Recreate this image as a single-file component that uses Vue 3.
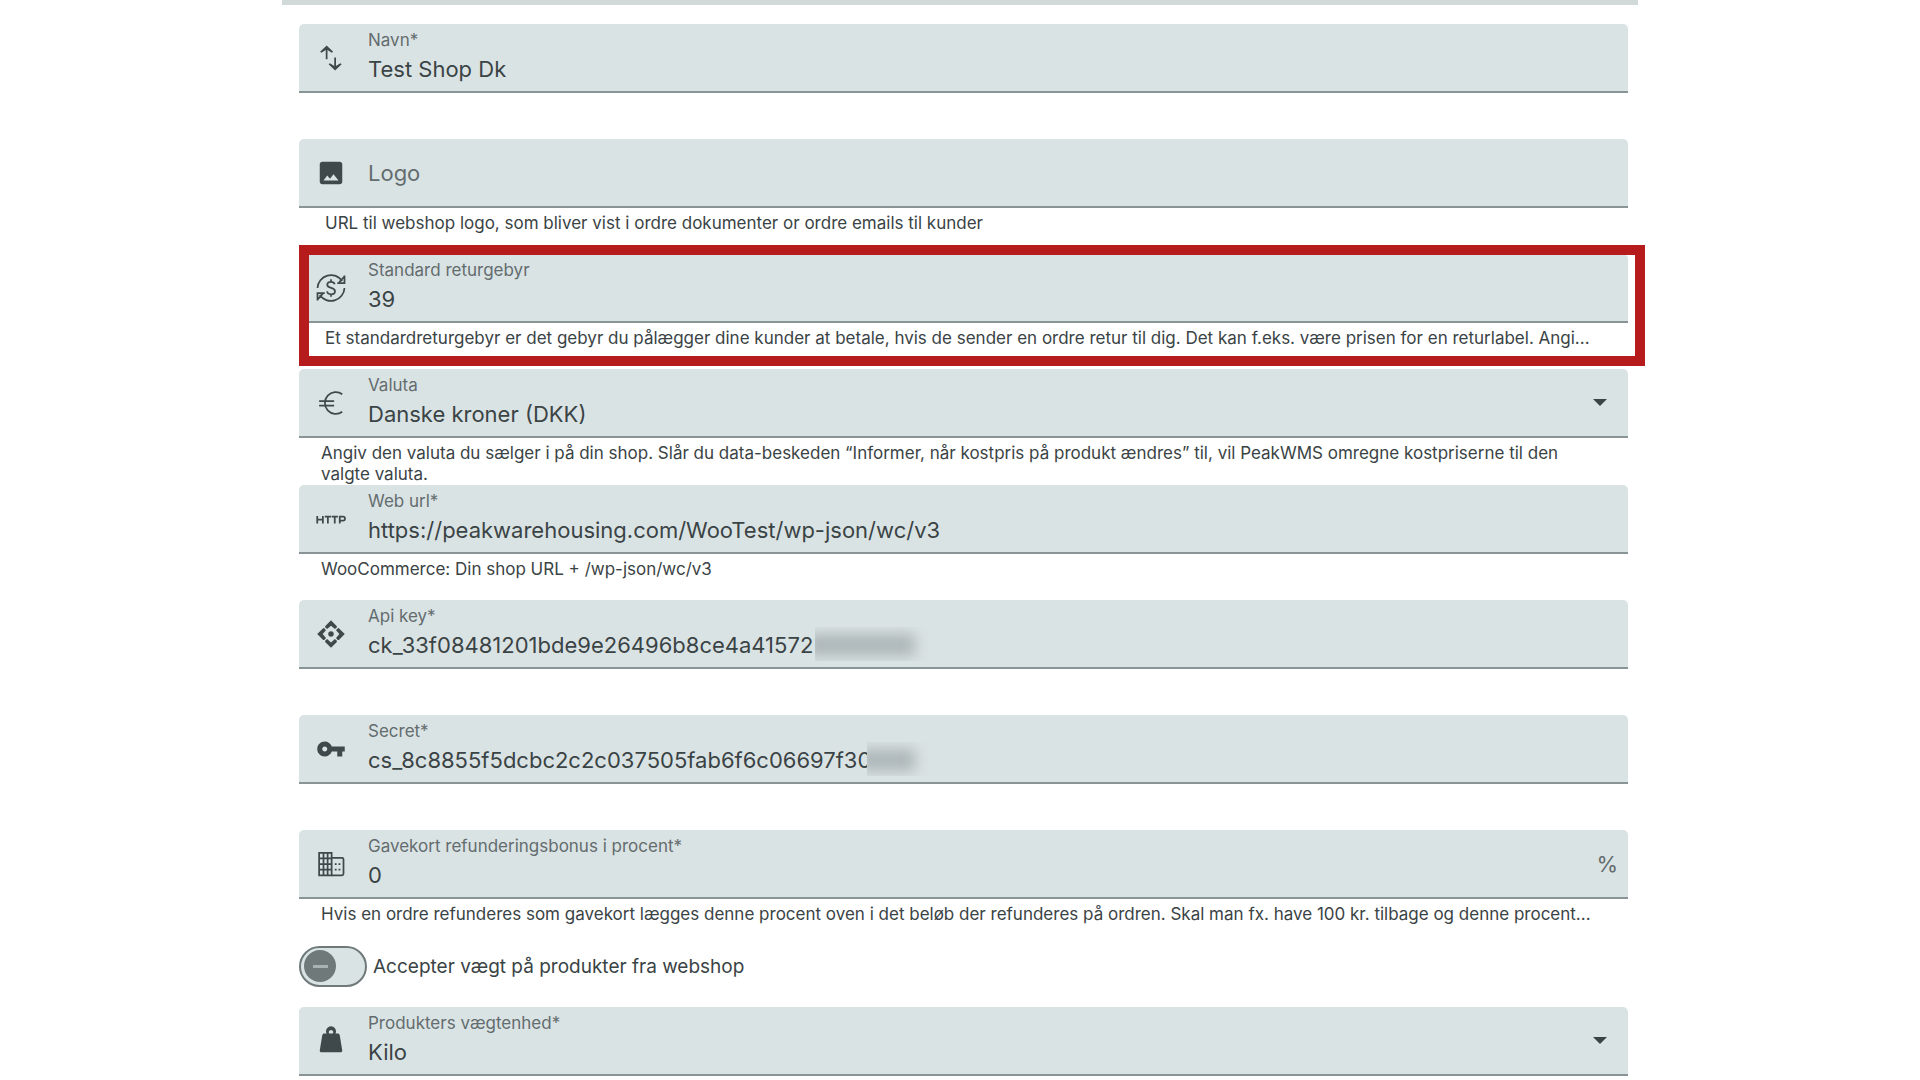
<template>
  <main class="page">
    <form class="settings" @submit.prevent>
      <div v-for="field in fields" :key="field.id" class="row">
        <div class="field">
          <svg class="icon" viewBox="0 0 24 24" aria-hidden="true">
            <path v-for="d in icons[field.icon].fill" :key="d" :d="d" fill="currentColor" fill-rule="evenodd" />
            <path v-for="d in icons[field.icon].stroke" :key="d" :d="d" class="stroke" />
          </svg>
          <div class="control" :class="{ empty: !field.label }">
            <label v-if="field.label" :for="field.id">{{ field.label }}</label>
            <select v-if="field.options" :id="field.id" v-model="field.value">
              <option v-for="option in field.options" :key="option">{{ option }}</option>
            </select>
            <input
              v-else
              :id="field.id"
              v-model="field.value"
              type="text"
              :placeholder="field.placeholder"
              :aria-label="field.placeholder"
              spellcheck="false"
            />
          </div>
          <span v-if="field.suffix" class="suffix">{{ field.suffix }}</span>
          <svg v-if="field.options" class="arrow" viewBox="0 0 14 7" aria-hidden="true">
            <path d="M0 0h14L7 7z" fill="currentColor" />
          </svg>
          <span v-if="field.mask" class="mask" :class="field.mask"></span>
        </div>
        <p v-if="field.hint" class="hint" :class="field.hintClass">{{ field.hint }}</p>
        <div v-if="field.highlight" class="highlight"></div>
      </div>

      <label class="toggle">
        <input v-model="acceptWeight" type="checkbox" role="switch" />
        <span class="track"><span class="knob"></span></span>
        Accepter vægt på produkter fra webshop
      </label>

      <div class="row">
        <div class="field">
          <svg class="icon" viewBox="0 0 24 24" aria-hidden="true">
            <path :d="icons.weight.fill[0]" fill="currentColor" fill-rule="evenodd" />
          </svg>
          <div class="control">
            <label for="unit">Produkters vægtenhed*</label>
            <select id="unit" v-model="unit">
              <option>Kilo</option>
              <option>Gram</option>
            </select>
          </div>
          <svg class="arrow" viewBox="0 0 14 7" aria-hidden="true">
            <path d="M0 0h14L7 7z" fill="currentColor" />
          </svg>
        </div>
      </div>
    </form>
  </main>
</template>

<script setup>
import { ref } from 'vue'

const acceptWeight = ref(false)
const unit = ref('Kilo')

const fields = ref([
  { id: 'name', icon: 'swap', label: 'Navn*', value: 'Test Shop Dk' },
  {
    id: 'logo',
    icon: 'image',
    placeholder: 'Logo',
    value: '',
    hint: 'URL til webshop logo, som bliver vist i ordre dokumenter or ordre emails til kunder',
    hintClass: 'indented'
  },
  {
    id: 'fee',
    icon: 'refund',
    label: 'Standard returgebyr',
    value: '39',
    hint: 'Et standardreturgebyr er det gebyr du pålægger dine kunder at betale, hvis de sender en ordre retur til dig. Det kan f.eks. være prisen for en returlabel. Angi...',
    hintClass: 'indented single',
    highlight: true
  },
  {
    id: 'currency',
    icon: 'euro',
    label: 'Valuta',
    value: 'Danske kroner (DKK)',
    options: ['Danske kroner (DKK)', 'Euro (EUR)'],
    hint: 'Angiv den valuta du sælger i på din shop. Slår du data-beskeden “Informer, når kostpris på produkt ændres” til, vil PeakWMS omregne kostpriserne til den valgte valuta.'
  },
  {
    id: 'url',
    icon: 'http',
    label: 'Web url*',
    value: 'https://peakwarehousing.com/WooTest/wp-json/wc/v3',
    hint: 'WooCommerce: Din shop URL + /wp-json/wc/v3'
  },
  { id: 'key', icon: 'api', label: 'Api key*', value: 'ck_33f08481201bde9e26496b8ce4a41572', mask: 'mask-key' },
  { id: 'secret', icon: 'key', label: 'Secret*', value: 'cs_8c8855f5dcbc2c2c037505fab6f6c06697f30', mask: 'mask-secret' },
  {
    id: 'bonus',
    icon: 'building',
    label: 'Gavekort refunderingsbonus i procent*',
    value: '0',
    suffix: '%',
    hint: 'Hvis en ordre refunderes som gavekort lægges denne procent oven i det beløb der refunderes på ordren. Skal man fx. have 100 kr. tilbage og denne procent...',
    hintClass: 'single'
  }
])

const icons = {
  swap: {
    fill: ['M8.500 2l5.200 5-1 .8-4.200-2.600-4.200 2.600-1-.8z', 'M15.300 22l-5.200-5 1-.8 4.200 2.600 4.200-2.600 1 .8z'],
    stroke: ['M8.500 13V4', 'M15.300 11.500V20']
  },
  image: { fill: ['M21 19V5c0-1.100-.9-2-2-2H5c-1.100 0-2 .9-2 2v14c0 1.100.9 2 2 2h14c1.100 0 2-.9 2-2zM6 18l3-4 2.200 2.600L14 13l4 5H6z'] },
  refund: {
    stroke: [
      'M1.200 12A10.800 10.800 0 0 1 21 6.500M22.800 2v6H17M22.500 3l-4 4.500',
      'M22.800 12A10.800 10.800 0 0 1 3 17.500M1.200 22v-6H7M1.500 21l4-4.500',
      'M15 9c-.4-1.400-1.500-2-3-2-1.700 0-3 .9-3 2.400 0 3.400 6.200 1.700 6.200 5.100 0 1.600-1.400 2.500-3.200 2.500-1.600 0-2.900-.8-3.200-2.300M12 5v2M12 17v2'
    ]
  },
  euro: { stroke: ['M21 5A8.700 8.700 0 1 0 21 19M2.500 10.500h12M2.500 14h12'] },
  http: { stroke: ['M1 9.500v6M5.500 9.500v6M1 12.500h4.500', 'M7 10h5M9.500 10v5.500', 'M12.500 10h5M15 10v5.500', 'M19 15.500V10h2.700c2 0 2 3.300 0 3.300H19'] },
  api: {
    fill: [
      'M12 9.800a2.200 2.200 0 1 1 0 4.400 2.200 2.200 0 0 1 0-4.400z',
      'M12 1l4.300 4.300c.6.600.6 1.200 0 1.700l-1.200 1L12 5.300 8.900 8l-1.200-1c-.6-.5-.6-1.100 0-1.700z',
      'M12 23l-4.300-4.300c-.6-.6-.6-1.200 0-1.700l1.200-1 3.100 2.700 3.100-2.700 1.200 1c.6.500.6 1.100 0 1.700z',
      'M1 12l4.300-4.300c.6-.6 1.200-.6 1.700 0l1 1.200L5.300 12 8 15.100l-1 1.200c-.5.600-1.100.6-1.700 0z',
      'M23 12l-4.300 4.300c-.6.600-1.200.6-1.700 0l-1-1.200 2.700-3.100L16 8.900l1-1.200c.5-.6 1.100-.6 1.700 0z'
    ]
  },
  key: { fill: ['M12.650 10C11.830 7.670 9.610 6 7 6c-3.310 0-6 2.690-6 6s2.690 6 6 6c2.610 0 4.830-1.670 5.650-4H17v4h4v-4h2v-4H12.650zM7 14c-1.100 0-2-.9-2-2s.9-2 2-2 2 .9 2 2-.9 2-2 2z'] },
  building: {
    stroke: ['M2.500 3h10v18h-10zM6 3v18M9.300 3v18M2.500 7.500h10M2.500 12h10M2.500 16.500h10', 'M12.500 7h8.300c.9 0 1.200.4 1.200 1.200v11.600c0 .8-.3 1.200-1.200 1.200h-8.300', 'M15 12h1.500M18 12h1.500M15 16.500h1.500M18 16.500h1.500']
  },
  weight: { fill: ['M8.400 6A4 4 0 1 1 15.600 6h1.700c.8 0 1.500.5 1.700 1.300L21 19.500c.1.900-.5 1.500-1.400 1.500H4.400C3.500 21 2.900 20.400 3 19.500L5 7.300C5.200 6.500 5.900 6 6.700 6h1.700zm2.100 0h3a1.800 1.800 0 1 0-3 0z'] }
}
</script>

<style>
body {
  margin: 0;
  background: #fff;
}
</style>

<style scoped>
.page {
  padding: 0 282px;
  font-family: Inter, "Liberation Sans", sans-serif;
  color: #3a4345;
}

.settings {
  border-top: 5px solid #d2d9d9;
  padding: 19px 10px 0 17px;
}

.row {
  position: relative;
  min-height: 115px;
}

.row:last-child {
  min-height: 0;
}

.field {
  position: relative;
  display: flex;
  align-items: center;
  box-sizing: border-box;
  height: 69px;
  padding: 0 10px 0 17px;
  background: #dae3e4;
  border-bottom: 2px solid #899496;
  border-radius: 5px 5px 0 0;
}

.icon {
  flex-shrink: 0;
  width: 30px;
  height: 30px;
  color: #3f494b;
}

.stroke {
  fill: none;
  stroke: currentColor;
  stroke-width: 1.4;
}

.control {
  display: flex;
  flex: 1;
  flex-direction: column;
  gap: 3px;
  min-width: 0;
  padding-left: 22px;
}

.control label {
  font-size: 17px;
  line-height: 20px;
  color: #636c6e;
}

.control input,
.control select {
  width: 100%;
  height: 32px;
  margin: 0;
  padding: 0;
  border: none;
  outline: none;
  appearance: none;
  background: transparent;
  color: #3a4345;
  font-family: inherit;
  font-size: 22px;
}

.control.empty input::placeholder {
  color: #636c6e;
  opacity: 1;
}

.suffix {
  font-size: 22px;
  color: #636c6e;
}

.arrow {
  width: 14px;
  height: 7px;
  margin-right: 11px;
}

.hint {
  margin: 0;
  padding: 5px 20px 0 22px;
  font-size: 17px;
  line-height: 21px;
}

.hint.indented {
  padding-left: 26px;
}

.hint.single {
  overflow: hidden;
  white-space: nowrap;
}

/* Red frame drawn over the return fee */
.highlight {
  position: absolute;
  top: -9px;
  right: -17px;
  bottom: 3px;
  left: 0;
  z-index: 1;
  border: 10px solid #b71c1c;
  pointer-events: none;
}

/* Blurred end of the credentials */
.mask {
  position: absolute;
  top: 27px;
  overflow: hidden;
  height: 34px;
  background: #dae3e4;
}

.mask::before {
  content: "";
  position: absolute;
  inset: 7px 16px 5px -8px;
  background: #adb6b8;
  filter: blur(7px);
}

.mask-key {
  left: 516px;
  width: 116px;
}

.mask-secret {
  left: 568px;
  width: 64px;
}

.toggle {
  display: flex;
  align-items: center;
  height: 42px;
  margin-bottom: 20px;
  font-size: 19px;
  cursor: pointer;
}

.toggle input {
  position: absolute;
  opacity: 0;
}

.track {
  display: flex;
  align-items: center;
  box-sizing: border-box;
  width: 68px;
  height: 41px;
  margin-right: 6px;
  padding: 0 3px;
  border: 2px solid #6f797a;
  border-radius: 21px;
  background: #dae3e4;
}

.knob {
  display: flex;
  align-items: center;
  justify-content: center;
  width: 32px;
  height: 32px;
  border-radius: 50%;
  background: #6f797a;
}

.knob::before {
  content: "";
  width: 15px;
  height: 3px;
  background: #a9b2b3;
}

.toggle input:checked + .track {
  justify-content: flex-end;
}

@media (max-width: 1100px) {
  .page {
    padding: 0 24px;
  }
}
</style>
